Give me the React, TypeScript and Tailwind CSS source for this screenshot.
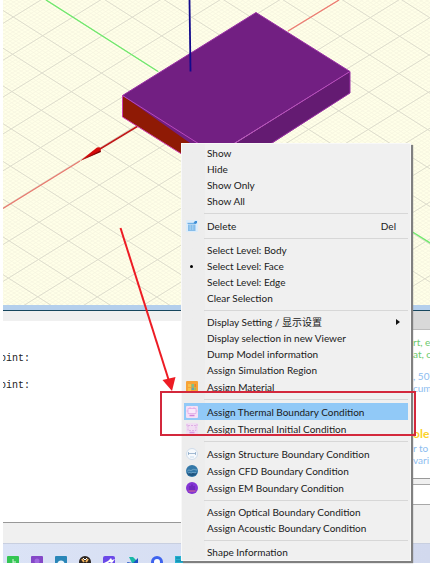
import React from 'react';

type MenuEntry = {
  label: string;
  shortcut?: string;
  icon?: React.ReactNode;
  checked?: boolean;
  submenu?: boolean;
  active?: boolean;
};

const TrashIcon = () => (
  <svg viewBox="0 0 12 12" className="h-3 w-3">
    <rect width="12" height="12" fill="#dcecfa" />
    <path d="M2 4.500h7.500V11H2z" fill="#86bdea" />
    <path d="M1.500 2.800h8v1.200h-8z" fill="#6fb0e6" />
    <path d="M7.500 3l1.500-2h2v2L9.500 4z" fill="#3f8fd6" />
    <path d="M4.200 5v5M6.800 5v5" stroke="#b9dcf6" strokeWidth=".7" />
  </svg>
);

const MaterialIcon = () => (
  <svg viewBox="0 0 12 12" className="h-3 w-3">
    <rect width="12" height="12" rx="1" fill="#f7a338" />
    <path d="M2 3h3v3H2zM2 7h3v3H2z" fill="#f9c04a" />
    <path d="M5.500 3H8v3H5.500z" fill="#7fc08a" />
    <path d="M8.500 3H10v3H8.500z" fill="#e9862b" />
    <path d="M5.500 6.500H8V9H5.500z" fill="#5aa9b8" />
    <path d="M8.500 6.500H10V9H8.500z" fill="#8cbf6a" />
  </svg>
);

const ThermalIcon = () => (
  <svg viewBox="0 0 12 12" className="h-3 w-3">
    <rect width="12" height="12" rx="1" fill="#f7dff5" />
    <path d="M2 2.500h8v5H2z" fill="#f9e9fa" stroke="#e0aae6" strokeWidth=".8" />
    <path d="M4 1v2M8 1v2M.5 5H2M10 5h1.500" stroke="#e0aae6" strokeWidth=".8" />
    <path d="M3.500 9.500h5" stroke="#cf85da" strokeWidth="1.500" />
  </svg>
);

const InitialIcon = () => (
  <svg viewBox="0 0 12 12" className="h-3 w-3">
    <rect width="12" height="12" rx="1" fill="#f1def3" />
    <path d="M2 2.500h8v5H2z" fill="none" stroke="#deb0e6" strokeDasharray="2 1" />
    <path d="M1 1v2M11 1v2" stroke="#deb0e6" />
    <path d="M3.500 9.500h5" stroke="#d79be2" strokeWidth="1.500" />
  </svg>
);

const StructureIcon = () => (
  <svg viewBox="0 0 12 12" className="h-3 w-3">
    <circle cx="6" cy="6" r="5.500" fill="#f6f9fc" stroke="#cfdcea" />
    <path d="M2 5.500h8M2.500 4v3M9.500 4v3" stroke="#8fabc8" strokeWidth=".8" />
    <path d="M4 9h4" stroke="#c9dbec" />
  </svg>
);

const CfdIcon = () => (
  <svg viewBox="0 0 12 12" className="h-3 w-3">
    <circle cx="6" cy="6" r="6" fill="#3478a8" />
    <path d="M.8 8h10.400A6 6 0 0 1 .8 8z" fill="#1f5580" />
    <path d="M1 6.500c2-3 3 0 5-1.500s3 0 5 0M2 8c2-1 3 .5 4-.3s2 .3 4 0" fill="none" stroke="#7fb0cf" strokeWidth=".8" />
  </svg>
);

const EmIcon = () => (
  <svg viewBox="0 0 12 12" className="h-3 w-3">
    <circle cx="6" cy="6" r="6" fill="#8334d4" />
    <path d="M4 8.500V4M6 8.500V2.500M8 8.500V4" stroke="#5c1fa5" strokeWidth="1" />
    <path d="M2.500 9h7" stroke="#d46a8c" strokeWidth="1" />
  </svg>
);

const groups: MenuEntry[][] = [
  [{ label: 'Show' }, { label: 'Hide' }, { label: 'Show Only' }, { label: 'Show All' }],
  [{ label: 'Delete', shortcut: 'Del', icon: <TrashIcon /> }],
  [
    { label: 'Select Level: Body' },
    { label: 'Select Level: Face', checked: true },
    { label: 'Select Level: Edge' },
    { label: 'Clear Selection' },
  ],
  [
    { label: 'Display Setting / 显示设置', submenu: true },
    { label: 'Display selection in new Viewer' },
    { label: 'Dump Model information' },
    { label: 'Assign Simulation Region' },
    { label: 'Assign Material', icon: <MaterialIcon /> },
  ],
  [
    { label: 'Assign Thermal Boundary Condition', icon: <ThermalIcon />, active: true },
    { label: 'Assign Thermal Initial Condition', icon: <InitialIcon /> },
  ],
  [
    { label: 'Assign Structure Boundary Condition', icon: <StructureIcon /> },
    { label: 'Assign CFD Boundary Condition', icon: <CfdIcon /> },
    { label: 'Assign EM Boundary Condition', icon: <EmIcon /> },
  ],
  [{ label: 'Assign Optical Boundary Condition' }, { label: 'Assign Acoustic Boundary Condition' }],
  [{ label: 'Shape Information' }],
];

// ground plane: two families of lines, ten minor cells per major cell
const origin = { x: 39, y: 73 };
const u = { x: 29.4, y: 18.7 };
const v = { x: 30.1, y: -18.6 };

const gridPath = (from: number, to: number, step: number) => {
  let d = '';
  for (let i = from; i <= to; i += step) {
    const k = i / 10;
    const ax = origin.x + u.x * k;
    const ay = origin.y + u.y * k;
    d += `M${ax - v.x * 25} ${ay - v.y * 25}L${ax + v.x * 25} ${ay + v.y * 25}`;
    const bx = origin.x + v.x * k;
    const by = origin.y + v.y * k;
    d += `M${bx - u.x * 25} ${by - u.y * 25}L${bx + u.x * 25} ${by + u.y * 25}`;
  }
  return d;
};

const Viewport = () => (
  <svg className="block h-[305px] w-full bg-[#ffffe8]" aria-label="3D view">
    <path d={gridPath(-200, 200, 1)} stroke="#f5f4df" strokeWidth=".7" fill="none" />
    <path d={gridPath(-200, 200, 10)} stroke="#deddcd" strokeWidth="1" fill="none" />
    <path d="M43 0L155 71.500M408 231L440 251" stroke="#6fe96c" strokeWidth="1.400" />
    <path d="M285 31L336 0" stroke="#ef7a70" strokeWidth="1.300" />
    <path d="M0 208.500L77 161" stroke="#e8786e" strokeWidth="1.300" />
    <path d="M97 149L135 126" stroke="#c01818" strokeWidth="1.600" />
    <path d="M77 161L94 147.500Q99 146 97.500 151.500Z" fill="#d40a0a" />
    <path d="M77 161L98 152L97.500 150.500Z" fill="#7d0505" />
    <path d="M119.500 95.500L204 149V170L119.500 117Z" fill="#8f1a05" />
    <path d="M347 71.500V93L220 175L204 170V161Z" fill="#641b72" />
    <path d="M253 12.500L347 71.500L212 155H204L119.500 95.500Z" fill="#721f82" />
    <path d="M119.500 95.500L204 149M347 71.500L216 153" stroke="#b848bd" strokeWidth="1" />
    <path d="M119.500 95.500L253 12.500L347 71.500V93L250 155" fill="none" stroke="#9a32a5" strokeWidth="1" />
    <path d="M119.500 95.500V117L185 158" fill="none" stroke="#d03fb0" strokeWidth="1" />
    <path d="M186.500 0L187.500 71.500" stroke="#120a8c" strokeWidth="1.800" />
  </svg>
);

const MenuItem = ({ item }: { item: MenuEntry }) => (
  <button
    type="button"
    role="menuitem"
    className={`flex w-full items-center text-left ${item.icon ? 'h-[17px]' : 'h-4'} ${
      item.active ? 'bg-[#91c9f7]' : ''
    }`}
  >
    <span className="flex w-[23px] shrink-0 items-center pl-0.5">
      {item.icon}
      {item.checked && <span className="ml-1 h-[3px] w-[3px] rounded-full bg-black" />}
    </span>
    <span className="flex-1 whitespace-nowrap">{item.label}</span>
    {item.shortcut && <span className="pr-3">{item.shortcut}</span>}
    {item.submenu && (
      <svg viewBox="0 0 4 6" className="mr-2 h-[6px] w-1">
        <path d="M0 0l4 3-4 3z" fill="#111" />
      </svg>
    )}
  </button>
);

const ContextMenu = () => (
  <div
    role="menu"
    className="absolute left-[181px] top-[143px] w-[230px] border border-[#f8f8f8] bg-[#f0f0f0] bg-linear-to-r from-[#ededed] from-10% to-[#f0f0f0] to-10% px-0.5 pt-px font-['Lato','Noto_Sans_CJK_SC',sans-serif] text-[10px] leading-4 text-[#1a1a1a] shadow-[2px_2px_1px_#808080]"
  >
    {groups.map((group, i) => (
      <div key={i}>
        {i > 0 && <div role="separator" className="mb-[3px] ml-5 mt-1 border-t border-[#d7d7d7]" />}
        {group.map((item) => (
          <MenuItem key={item.label} item={item} />
        ))}
      </div>
    ))}
  </div>
);

const Console = () => (
  <div className="min-w-0 flex-1 bg-[#f0f0f0] pt-[10px]">
    <div className="h-[202px] overflow-hidden border-b border-[#989898] bg-white pt-6 font-['Liberation_Mono',monospace] text-[10px] leading-[27px] text-[#222]">
      <p className="-ml-[3px]">oint:</p>
      <p className="-ml-[3px]">oint:</p>
    </div>
  </div>
);

const HelpPanel = () => (
  <div className="w-[19px] shrink-0 overflow-hidden whitespace-nowrap bg-[#f0f0f0] font-['Lato',sans-serif] text-[10px] leading-3">
    <div className="h-[19px] border-b border-[#bdbdbd] bg-[#d9d9d9]" />
    <div className="h-[149px] border-b border-[#999] bg-white pl-0.5 pt-[6px] text-[#8dbdf0]">
      <p className="text-[#6cc96c]">rt, e</p>
      <p className="text-[#6cc96c]">at, cy</p>
      <p className="mt-[10px]">, 50)</p>
      <p>cum</p>
      <p className="mt-8 text-xs font-bold leading-4 text-[#fbd22c]">ole</p>
      <p>r to</p>
      <p>vari</p>
    </div>
    <div className="mt-[5px] h-[21px] border-y border-[#a8a8a8] bg-white" />
  </div>
);

const Taskbar = () => (
  <div className="flex h-5 items-start gap-3 overflow-hidden border-t border-[#c8cfe0] bg-linear-to-r from-[#dbe3f6] to-[#d2d9ee] pl-1 pt-3">
    <svg viewBox="0 0 12 12" className="h-3 w-3 shrink-0">
      <rect width="12" height="12" rx="1" fill="#33c553" />
      <path d="M6 3v6M6 6h3" stroke="#d9f7df" />
    </svg>
    <svg viewBox="0 0 12 12" className="h-3 w-3 shrink-0">
      <rect width="12" height="12" rx="1" fill="#8448c8" />
      <circle cx="6" cy="5" r="2.500" fill="#a06ae0" />
    </svg>
    <svg viewBox="0 0 12 12" className="h-3 w-3 shrink-0">
      <rect width="12" height="12" rx="1" fill="#2a86b8" />
      <circle cx="6" cy="8" r="3.500" fill="#eaf6fc" />
    </svg>
    <svg viewBox="0 0 12 12" className="h-3 w-3 shrink-0">
      <circle cx="6" cy="6" r="6" fill="#2b2420" />
      <path d="M3 3l2 3M9 3L7 6" stroke="#f2b35c" strokeWidth="2" />
      <path d="M4 2l2 2 2-2" stroke="#fff" fill="none" />
    </svg>
    <svg viewBox="0 0 12 12" className="h-3 w-3 shrink-0">
      <rect width="12" height="12" rx="2" fill="#6a48e8" />
      <path d="M1 7l4-2 3-3 1 2 3-1-3 4-3-1-2 3z" fill="#fff" />
    </svg>
    <svg viewBox="0 0 12 12" className="h-3 w-3 shrink-0">
      <path d="M2 1h4l5 5-5 3z" fill="#19b8a6" />
      <path d="M11 2v7L2 11 0 6l6 1z" fill="#1d4fc4" />
    </svg>
    <svg viewBox="0 0 12 12" className="h-3 w-3 shrink-0">
      <circle cx="6" cy="6" r="4.500" fill="#fff" stroke="#3d63ee" strokeWidth="3" />
    </svg>
    <svg viewBox="0 0 12 12" className="h-3 w-3 shrink-0">
      <path d="M0 0h6v3h6v9H0z" fill="#25b0cf" />
      <path d="M1 2h4M1 5h8" stroke="#0e7fa3" />
    </svg>
  </div>
);

const Annotation = () => (
  <>
    <svg viewBox="0 0 60 170" className="pointer-events-none absolute left-[117px] top-[224px] h-[170px] w-[60px]">
      <path d="M3.500 4L52 157" stroke="#ed1c24" strokeWidth="2" />
      <path d="M55 167L45.500 156L58.500 153Z" fill="#ed1c24" />
    </svg>
    <div className="pointer-events-none absolute left-[160px] top-[391px] h-[45px] w-[256px] border-2 border-[#d3283c]" />
  </>
);

const App = () => {
  return (
    <div className="relative overflow-hidden bg-white pb-px pl-[3px] pr-1">
      <Viewport />
      <div className="h-[6px] border-b border-[#17475e] bg-[#b4cfec]" />
      <div className="flex h-[232px] bg-[#f0f0f0]">
        <Console />
        <HelpPanel />
      </div>
      <Taskbar />
      <ContextMenu />
      <Annotation />
    </div>
  );
};

export default App;
